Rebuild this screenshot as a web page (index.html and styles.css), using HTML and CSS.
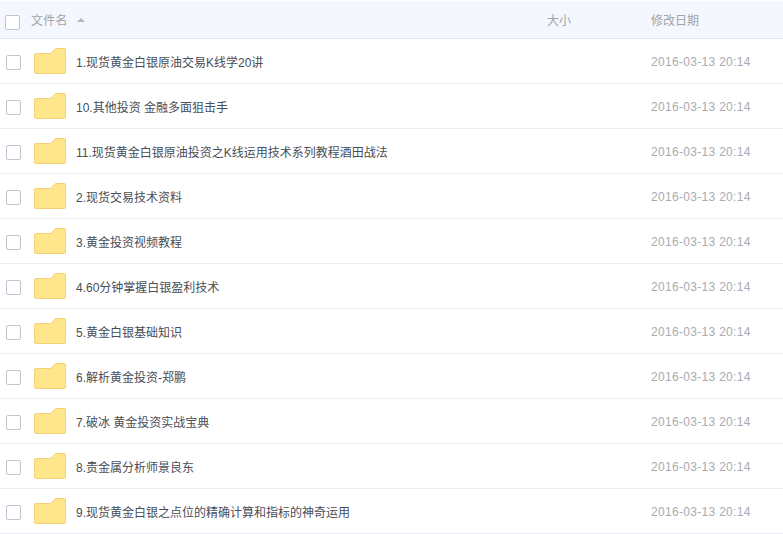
FILE: index.html
```html
<!DOCTYPE html>
<html lang="zh">
<head>
<meta charset="utf-8">
<title>文件列表</title>
<link rel="stylesheet" href="styles.css">
</head>
<body>
<svg class="defs" width="0" height="0"><symbol id="folder" viewBox="0 0 33 28"><path d="M3 6.500H17.500L22.500 1.500H31a1.500 1.500 0 0 1 1.500 1.500V25a1.500 1.500 0 0 1-1.500 1.500H3A1.500 1.500 0 0 1 1.500 25V8A1.500 1.500 0 0 1 3 6.500Z" fill="#ffe58c" stroke="#f5d273"/></symbol></svg>
<div class="head">
  <span class="check head-check"></span>
  <span class="col-name">文件名<i class="sort"></i></span>
  <span class="col-size">大小</span>
  <span class="col-date">修改日期</span>
</div>
<ul class="list">
  <li class="row"><span class="check"></span><svg class="folder"><use href="#folder"/></svg><span class="name">1.现货黄金白银原油交易K线学20讲</span><span class="date">2016-03-13 20:14</span></li>
  <li class="row"><span class="check"></span><svg class="folder"><use href="#folder"/></svg><span class="name">10.其他投资 金融多面狙击手</span><span class="date">2016-03-13 20:14</span></li>
  <li class="row"><span class="check"></span><svg class="folder"><use href="#folder"/></svg><span class="name">11.现货黄金白银原油投资之K线运用技术系列教程酒田战法</span><span class="date">2016-03-13 20:14</span></li>
  <li class="row"><span class="check"></span><svg class="folder"><use href="#folder"/></svg><span class="name">2.现货交易技术资料</span><span class="date">2016-03-13 20:14</span></li>
  <li class="row"><span class="check"></span><svg class="folder"><use href="#folder"/></svg><span class="name">3.黄金投资视频教程</span><span class="date">2016-03-13 20:14</span></li>
  <li class="row"><span class="check"></span><svg class="folder"><use href="#folder"/></svg><span class="name">4.60分钟掌握白银盈利技术</span><span class="date">2016-03-13 20:14</span></li>
  <li class="row"><span class="check"></span><svg class="folder"><use href="#folder"/></svg><span class="name">5.黄金白银基础知识</span><span class="date">2016-03-13 20:14</span></li>
  <li class="row"><span class="check"></span><svg class="folder"><use href="#folder"/></svg><span class="name">6.解析黄金投资-郑鹏</span><span class="date">2016-03-13 20:14</span></li>
  <li class="row"><span class="check"></span><svg class="folder"><use href="#folder"/></svg><span class="name">7.破冰 黄金投资实战宝典</span><span class="date">2016-03-13 20:14</span></li>
  <li class="row"><span class="check"></span><svg class="folder"><use href="#folder"/></svg><span class="name">8.贵金属分析师景良东</span><span class="date">2016-03-13 20:14</span></li>
  <li class="row"><span class="check"></span><svg class="folder"><use href="#folder"/></svg><span class="name">9.现货黄金白银之点位的精确计算和指标的神奇运用</span><span class="date">2016-03-13 20:14</span></li>
</ul>
</body>
</html>
```
FILE: styles.css
```css
html, body { margin: 0; padding: 0; background: #fff; overflow: hidden; }
body { font-family: "Liberation Sans", "Noto Sans CJK SC", sans-serif; font-size: 12px; width: 783px; height: 534px; }
.defs { display: block; height: 0; }
.head { box-sizing: border-box; height: 38px; margin-top: 1px; background: #f4f7fd; border-bottom: 1px solid #e4e7ee; display: flex; align-items: center; color: #a0a3aa; }
.check { box-sizing: border-box; width: 15px; height: 15px; flex: none; border: 1px solid #c0c4d0; border-radius: 2px; background: #fff; margin: 3px 0 0 6px; }
.head-check { margin: 5px 0 0 5px; }
.col-name { margin-left: 11px; width: 516px; display: flex; align-items: center; letter-spacing: .3px; }
.sort { width: 0; height: 0; margin-left: 9px; border: 4px solid transparent; border-top: 0; border-bottom: 4px solid #b4b7bd; }
.col-size { width: 104px; }
.list { list-style: none; margin: 0; padding: 0; }
.row { box-sizing: border-box; height: 45px; border-bottom: 1px solid #ebeff5; display: flex; align-items: center; }
.folder { width: 33px; height: 28px; flex: none; margin: -1px 0 0 12px; }
.name { margin-left: 10px; width: 575px; color: #4a4d55; flex: none; }
.date { color: #a8abb2; letter-spacing: .31px; margin-top: 2px; }
```
